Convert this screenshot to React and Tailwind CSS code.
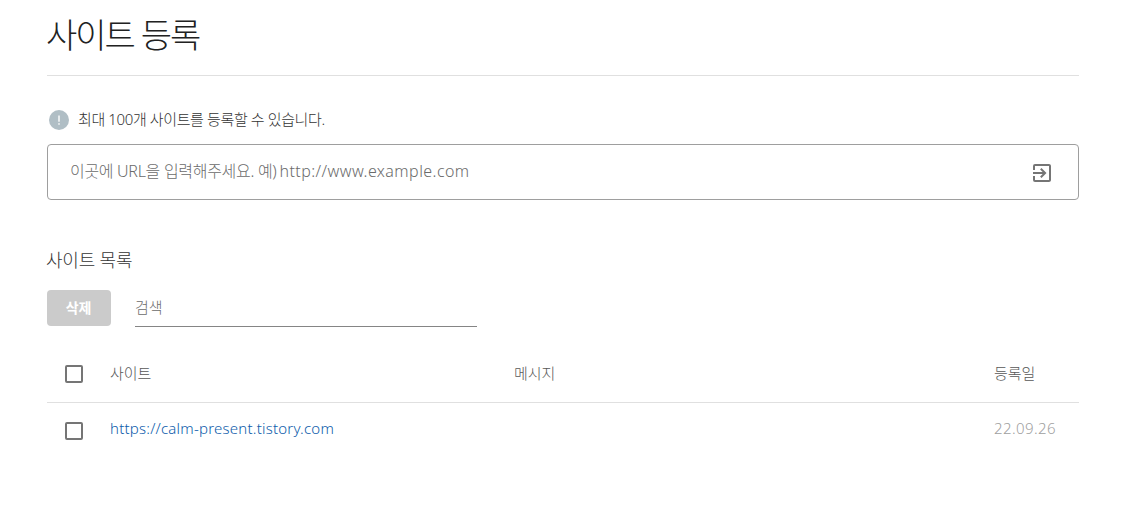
import React, { useState } from "react";
import { MdExitToApp } from "react-icons/md";

const sites = [
  { id: 1, url: "https://calm-present.tistory.com", message: "", date: "22.09.26" },
];

const CheckBox = ({ label, checked, onChange }) => (
  <input
    type="checkbox"
    aria-label={label}
    checked={checked}
    onChange={onChange}
    className="block h-[18px] w-[18px] appearance-none rounded-[2px] border-2 border-[#757575] checked:bg-[#757575]"
  />
);

const App = () => {
  const [url, setUrl] = useState("");
  const [search, setSearch] = useState("");
  const [selected, setSelected] = useState([]);

  const allSelected = selected.length === sites.length;
  const filteredSites = sites.filter((site) => site.url.includes(search));

  const toggleAll = () => setSelected(allSelected ? [] : sites.map((site) => site.id));

  const toggleSite = (id) => {
    setSelected((prev) =>
      prev.includes(id) ? prev.filter((item) => item !== id) : [...prev, id]
    );
  };

  return (
    <div className="h-[515px] overflow-hidden bg-white pl-[47px] pr-[65px] font-['Noto_Sans','Noto_Sans_CJK_KR',sans-serif] font-light text-[#333333]">
      <h1 className="-ml-px h-[75px] whitespace-nowrap pt-[11px] text-[34px] leading-[48px] tracking-[-2px] text-[#212121]">
        사이트 등록
      </h1>

      {/* Register form */}
      <div className="border-t border-[#e0e0e0] pt-[33px]">
        <div className="flex h-[22px] items-center">
          <span className="ml-[2px] flex h-5 w-5 items-center justify-center rounded-full bg-[#b0bec5]">
            <svg viewBox="0 0 20 20" className="h-5 w-5" fill="#fff">
              <rect x="9.3" y="5.5" width="1.4" height="6.2" />
              <rect x="9.3" y="13.2" width="1.4" height="1.5" />
            </svg>
          </span>
          <p className="mb-[2px] ml-[9px] whitespace-nowrap text-[15px] leading-[20px] tracking-[-0.38px]">
            최대 100개 사이트를 등록할 수 있습니다.
          </p>
        </div>
        <div className="mt-[13px] flex h-14 items-center rounded-[4px] border border-[#9e9e9e] pl-[22px] pr-6">
          <div className="mb-[3px] grid flex-1 items-center">
            {!url && (
              <label
                htmlFor="url"
                className="col-start-1 row-start-1 whitespace-nowrap text-[16px] tracking-[-0.3px] text-[#6b6b6b]"
              >
                이곳에 URL을 입력해주세요. 예)
                <span className="ml-[3px] tracking-[0.44px]">http://www.example.com</span>
              </label>
            )}
            <input
              id="url"
              value={url}
              onChange={(e) => setUrl(e.target.value)}
              className="col-start-1 row-start-1 h-8 bg-transparent text-[16px] outline-none"
            />
          </div>
          <button aria-label="등록" className="mt-[2px]">
            <MdExitToApp className="h-6 w-6 text-[#757575]" />
          </button>
        </div>
      </div>

      {/* Site list */}
      <h2 className="-ml-px mt-[48px] h-[42px] whitespace-nowrap text-[18px] leading-6 tracking-[-0.2px]">
        사이트 목록
      </h2>
      <div className="flex h-9 items-start">
        <button className="h-9 w-16 rounded-[4px] bg-[#cbcbcb] pr-px text-[14px] font-bold leading-[34px] tracking-[-0.1px] text-white">
          삭제
        </button>
        <input
          value={search}
          onChange={(e) => setSearch(e.target.value)}
          placeholder="검색"
          className="ml-6 h-[37px] w-[342px] border-b border-[#858585] pb-[2px] text-[15px] outline-none placeholder:text-[#6b6b6b]"
        />
      </div>

      <div className="mt-[18px] text-[15px]">
        <div className="flex h-[59px] items-center border-b border-[#e0e0e0] pl-[18px] pt-px tracking-[-0.1px] text-[#575757]">
          <CheckBox label="전체 선택" checked={allSelected} onChange={toggleAll} />
          <span className="mb-px ml-[27px] w-[404px]">사이트</span>
          <span className="mb-px w-[480px]">메시지</span>
          <span className="mb-px">등록일</span>
        </div>
        {filteredSites.map((site) => (
          <div key={site.id} className="flex h-[56px] items-center pl-[18px]">
            <CheckBox
              label={site.url}
              checked={selected.includes(site.id)}
              onChange={() => toggleSite(site.id)}
            />
            <a href="#" className="mb-[5px] ml-[27px] w-[404px] tracking-[0.22px] text-[#0d5cab]">
              {site.url}
            </a>
            <span className="w-[480px]">{site.message}</span>
            <span className="mb-[5px] tracking-[0.4px] text-[#a0a0a0]">{site.date}</span>
          </div>
        ))}
      </div>
    </div>
  );
};

export default App;
